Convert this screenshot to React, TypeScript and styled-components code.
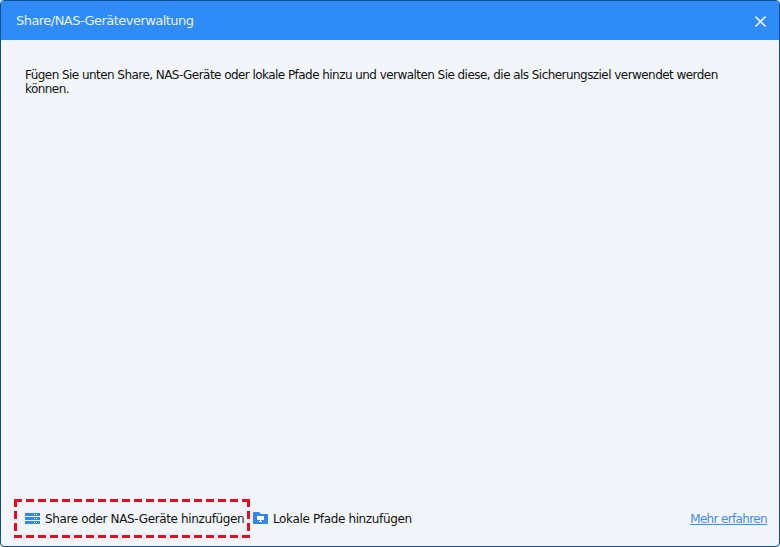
import React from 'react'
import styled, { createGlobalStyle } from 'styled-components'

const Global = createGlobalStyle`
html, body {
  margin: 0;
  padding: 0;
  background: #ffffff;
}
#root {
  width: 780px;
  height: 547px;
}
`

const ServerIcon = () => (
  <ServerSvg width="15" height="11" viewBox="0 0 15 11">
    <rect x="0" y="0" width="15" height="3" fill="#2f87ef" />
    <rect x="0" y="4" width="15" height="3" fill="#2f87ef" />
    <rect x="0" y="8" width="15" height="3" fill="#2f87ef" />
    <rect x="9" y="1" width="1" height="1" fill="#fff" />
    <rect x="11" y="1" width="1" height="1" fill="#fff" />
    <rect x="9" y="5" width="1" height="1" fill="#fff" />
    <rect x="11" y="5" width="1" height="1" fill="#fff" />
    <rect x="9" y="9" width="1" height="1" fill="#fff" />
    <rect x="11" y="9" width="1" height="1" fill="#fff" />
  </ServerSvg>
)

const FolderIcon = () => (
  <FolderSvg width="15" height="12" viewBox="0 0 15 12">
    <path d="M0 1 Q0 0 1 0 H6 L8 2 H14 Q15 2 15 3 V11 Q15 12 14 12 H1 Q0 12 0 11 Z" fill="#2f87ef" />
    <rect x="4" y="4" width="7" height="4" fill="#fff" />
    <rect x="7" y="8" width="1" height="1" fill="#fff" />
    <rect x="6" y="9" width="3" height="1" fill="#fff" />
  </FolderSvg>
)

const CloseIcon = () => (
  <svg width="11" height="11" viewBox="0 0 11 11">
    <path d="M0.5 0.5 L10.5 10.5 M10.5 0.5 L0.5 10.5" stroke="#e6f0fd" strokeWidth="1.6" fill="none" />
  </svg>
)

export default function App() {
  return (
    <>
      <Global />
      <Dialog>
        <TitleBar>
          <Title>Share/NAS-Geräteverwaltung</Title>
          <CloseButton><CloseIcon /></CloseButton>
        </TitleBar>
        <Body>
          <Intro>
            Fügen Sie unten Share, NAS-Geräte oder lokale Pfade hinzu und verwalten Sie diese, die als Sicherungsziel verwendet werden können.
          </Intro>
        </Body>
        <Footer>
          <Actions>
            <Highlight>
              <ActionButton>
                <ServerIcon />
                Share oder NAS-Geräte hinzufügen
              </ActionButton>
            </Highlight>
            <ActionButton>
              <FolderIcon />
              Lokale Pfade hinzufügen
            </ActionButton>
          </Actions>
          <MoreLink href="#">Mehr erfahren</MoreLink>
        </Footer>
      </Dialog>
    </>
  )
}

const ServerSvg = styled.svg`
display: block;
flex-shrink: 0;
margin-bottom: 2px;
`

const FolderSvg = styled.svg`
display: block;
flex-shrink: 0;
margin-bottom: 3px;
`

const Dialog = styled.div`
width: 780px;
height: 547px;
box-sizing: border-box;
display: flex;
flex-direction: column;
background-color: #f2f6fb;
border: 1px solid #0f4f96;
border-radius: 4px;
overflow: hidden;
font-family: 'DejaVu Sans', Tahoma, sans-serif;
`

const TitleBar = styled.div`
height: 39px;
flex-shrink: 0;
display: flex;
align-items: center;
justify-content: space-between;
padding: 0 13px 0 15px;
box-sizing: border-box;
background-color: #2f8bf5;
`

const Title = styled.div`
font-size: 13px;
letter-spacing: -0.54px;
color: #e6f0fd;
`

const CloseButton = styled.div`
display: flex;
align-items: center;
margin-top: 1px;
`

const Body = styled.div`
flex: 1;
padding: 28px 50px 0 24px;
`

const Intro = styled.p`
margin: 0;
font-size: 12px;
letter-spacing: -0.55px;
line-height: 14px;
color: #111111;
`

const Footer = styled.div`
display: flex;
align-items: center;
justify-content: space-between;
padding: 0 12px 8px 13px;
`

const Actions = styled.div`
display: flex;
align-items: center;
gap: 3px;
`

const Highlight = styled.div`
height: 39px;
width: 236px;
box-sizing: border-box;
display: flex;
align-items: center;
padding: 0 0 0 11px;
background-image:
  repeating-linear-gradient(90deg, #f0061d 0 8px, transparent 8px 12px),
  repeating-linear-gradient(90deg, #f0061d 0 8px, transparent 8px 12px),
  repeating-linear-gradient(180deg, #f0061d 0 8px, transparent 8px 12px),
  repeating-linear-gradient(180deg, #f0061d 0 8px, transparent 8px 12px);
background-size: 100% 3px, 100% 3px, 3px 100%, 3px 100%;
background-position: 0 0, 0 100%, 0 0, 100% 0;
background-repeat: no-repeat;
`

const ActionButton = styled.div`
display: flex;
align-items: center;
gap: 5px;
padding-top: 2px;
font-size: 12px;
line-height: 15px;
letter-spacing: -0.36px;
color: #111111;
white-space: nowrap;
`

const MoreLink = styled.a`
font-size: 12px;
letter-spacing: -0.65px;
color: #3f8cf0;
text-decoration: underline;
`
